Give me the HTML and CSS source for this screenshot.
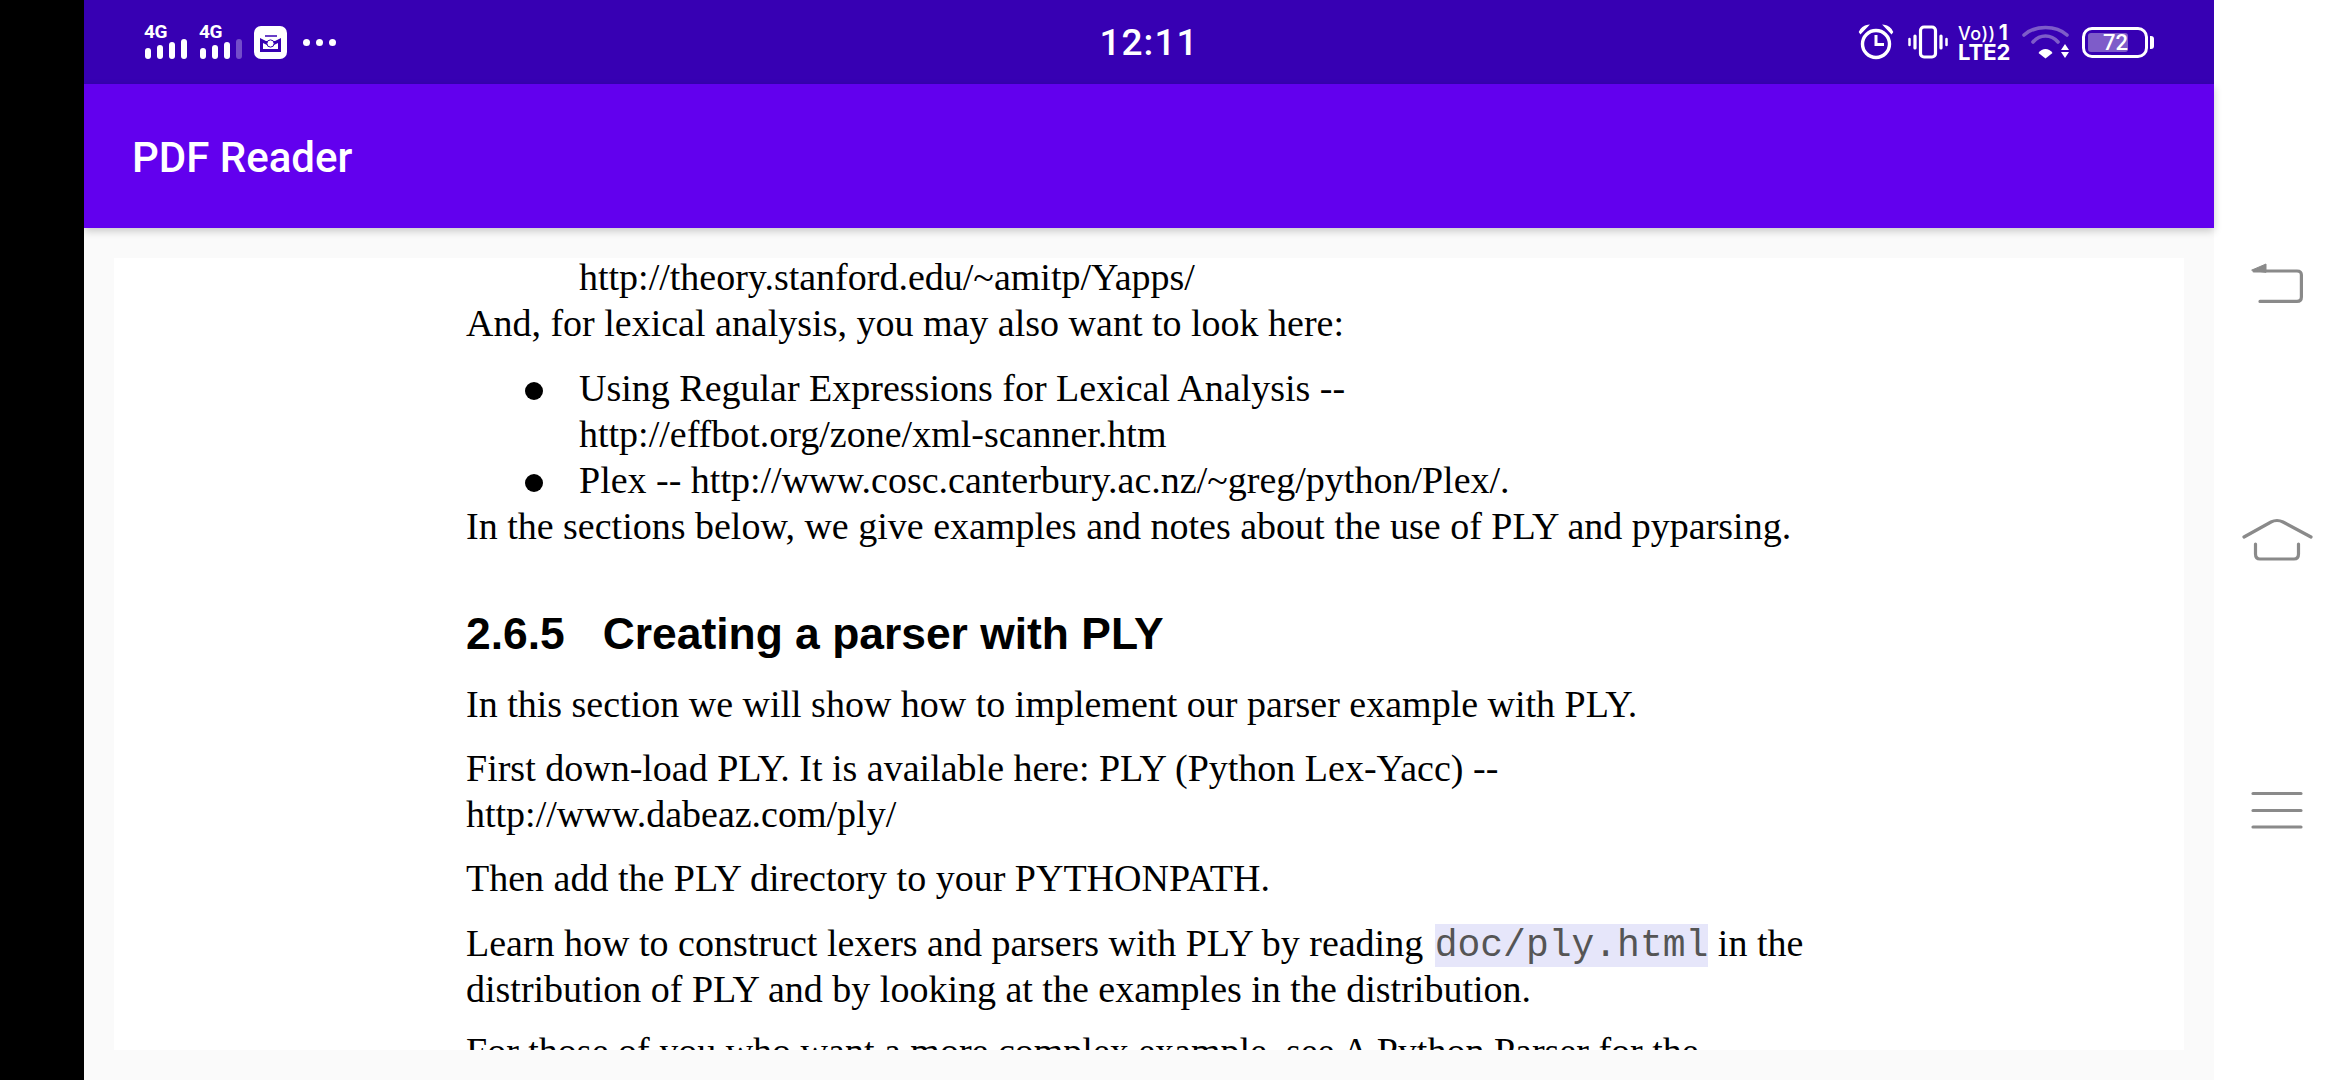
FILE: index.html
```html
<!DOCTYPE html>
<html lang="en">
<head>
    <meta charset="utf-8">
    <title>PDF Reader</title>
    <link rel="stylesheet" href="styles.css">
</head>
<body>
    <div class="edge"></div>
    <div class="app">
        <div class="status">
            <div class="status-left">
                <div class="signal">
                    <span class="net">4G</span>
                    <svg width="44" height="20" viewBox="0 0 44 20"><g fill="#fff"><rect x="1" y="9" width="6" height="11" rx="3"/><rect x="13" y="6" width="6" height="14" rx="3"/><rect x="25" y="3" width="6" height="17" rx="3"/><rect x="37" y="0" width="6" height="20" rx="3"/></g></svg>
                </div>
                <div class="signal">
                    <span class="net">4G</span>
                    <svg width="44" height="20" viewBox="0 0 44 20"><g fill="#fff"><rect x="1" y="9" width="6" height="11" rx="3"/><rect x="13" y="6" width="6" height="14" rx="3"/><rect x="25" y="3" width="6" height="17" rx="3"/><rect x="37" y="0" width="6" height="20" rx="3" opacity=".3"/></g></svg>
                </div>
                <svg class="mail" width="33" height="33" viewBox="0 0 33 33">
                    <rect width="33" height="33" rx="7" fill="#fff"/>
                    <path d="M11 10H23" stroke="#3700b3" stroke-width="1.500"/>
                    <path d="M6 12L12 15H21L27 12V26H6Z" fill="#3700b3"/>
                    <path d="M9 17L13 19H20L24 17V23H9Z" fill="#fff"/>
                    <circle cx="16.500" cy="17.500" r="3.600" fill="#fff" stroke="#3700b3" stroke-width="1"/>
                </svg>
                <div class="dots"><i></i><i></i><i></i></div>
            </div>
            <div class="clock">12:11</div>
            <div class="status-right">
                <svg class="ic-alarm" width="36" height="36" viewBox="0 0 36 36" fill="none" stroke="#fff">
                    <circle cx="18" cy="20" r="13.500" stroke-width="3.400"/>
                    <path d="M18 11V20.500H26" stroke-width="3"/>
                    <path d="M1.500 8Q4 2.500 10 1.500L2.500 9.500ZM34.500 8Q32 2.500 26 1.500L33.500 9.500Z" fill="#fff" stroke-width="1.400"/>
                </svg>
                <svg class="ic-vibrate" width="40" height="34" viewBox="0 0 40 34" fill="none" stroke="#fff" stroke-linecap="round">
                    <rect x="12.500" y="2" width="15" height="30" rx="3.500" stroke-width="3.200"/>
                    <path d="M7 11V23M33 11V23" stroke-width="3.200"/>
                    <path d="M1.500 14V20M38.500 14V20" stroke-width="2.500"/>
                </svg>
                <div class="sim">
                    <span class="sim-top">Vo))<b>1</b></span>
                    <span class="sim-bottom">LTE2</span>
                </div>
                <svg class="ic-wifi" width="48" height="34" viewBox="0 0 48 34" fill="none" stroke="#7e5cc9" stroke-linecap="round">
                    <path d="M2 10C13 0 34 0 45 10" stroke-width="3.600"/>
                    <path d="M11 17C18 9 29 9 36 17" stroke-width="3.600"/>
                    <path d="M16.500 28C20 22.500 27 22.500 30.500 28L23.500 33.500Z" fill="#fff" stroke="none"/>
                    <path d="M43 19L47 25H39ZM39 27H47L43 33Z" fill="#fff" stroke="none"/>
                </svg>
                <div class="battery">
                    <div class="battery-body">
                        <div class="battery-fill"></div>
                        <span class="battery-num">72</span>
                    </div>
                    <div class="battery-tip"></div>
                </div>
            </div>
        </div>
        <header class="bar">PDF Reader</header>
        <main class="viewer">
            <div class="page">
                <div class="doc">
                    <p class="line indent">http://theory.stanford.edu/~amitp/Yapps/</p>
                    <p class="line">And, for lexical analysis, you may also want to look here:</p>
                    <ul class="list">
                        <li>Using Regular Expressions for Lexical Analysis --<br>http://effbot.org/zone/xml-scanner.htm</li>
                        <li>Plex -- http://www.cosc.canterbury.ac.nz/~greg/python/Plex/.</li>
                    </ul>
                    <p class="line">In the sections below, we give examples and notes about the use of PLY and pyparsing.</p>
                    <h2 class="heading"><span class="num">2.6.5</span>Creating a parser with PLY</h2>
                    <p class="para">In this section we will show how to implement our parser example with PLY.</p>
                    <p class="para">First down-load PLY. It is available here: PLY (Python Lex-Yacc) --<br>http://www.dabeaz.com/ply/</p>
                    <p class="para">Then add the PLY directory to your PYTHONPATH.</p>
                    <p class="para para-code">Learn how to construct lexers and parsers with PLY by reading <code class="code">doc/ply.html</code> in the<br>distribution of PLY and by looking at the examples in the distribution.</p>
                    <p class="para para-last">For those of you who want a more complex example, see A Python Parser for the</p>
                </div>
            </div>
        </main>
    </div>
    <nav class="nav">
        <svg class="nav-back" width="52" height="41" viewBox="0 0 52 41" fill="none" stroke="#8a8a8a" stroke-width="3.200" stroke-linecap="round">
            <path d="M3 8H46Q50.400 8 50.400 12V34Q50.400 38.400 46 38.400H9"/>
            <path d="M1 7L15 1V9Z" fill="#8a8a8a" stroke-width="1"/>
        </svg>
        <svg class="nav-home" width="71" height="43" viewBox="0 0 71 43" fill="none" stroke="#8a8a8a" stroke-width="3.200" stroke-linecap="round">
            <path d="M2 19L29 4Q35 1 41 4L69 19"/>
            <path d="M13.500 26V36Q13.500 41 18 41H52Q56.500 41 56.500 36V26"/>
        </svg>
        <svg class="nav-menu" width="52" height="38" viewBox="0 0 52 38" stroke="#8a8a8a" stroke-width="3.200" stroke-linecap="round">
            <path d="M2 2.500H50M2 19.500H50M2 36H50"/>
        </svg>
    </nav>
</body>
</html>
```
FILE: styles.css
```css
* {
    box-sizing: border-box;
}

body {
    margin: 0;
    display: flex;
    height: 1080px;
    overflow: hidden;
    background: #fff;
    font-family: 'Roboto', sans-serif;
}

.edge {
    flex: none;
    width: 84px;
    background: #000;
}

.app {
    flex: none;
    width: 2130px;
    display: flex;
    flex-direction: column;
}

.status {
    height: 84px;
    background: #3700b3;
    color: #fff;
    padding: 0 60px;
    display: grid;
    grid-template-columns: 1fr auto 1fr;
    align-items: center;
}

.status-left {
    display: flex;
    align-items: center;
    gap: 11px;
}

.signal {
    display: flex;
    flex-direction: column;
    width: 44px;
    height: 34px;
}

.signal svg {
    display: block;
}

.net {
    font-size: 19px;
    font-weight: 700;
    line-height: 14px;
    letter-spacing: -0.5px;
}

.dots {
    display: flex;
    gap: 6px;
    margin-left: 5px;
}

.dots i {
    width: 7px;
    height: 7px;
    border-radius: 50%;
    background: #fff;
}

.clock {
    font-size: 37px;
    font-weight: 500;
    letter-spacing: 1px;
}

.status-right {
    display: flex;
    align-items: center;
    justify-content: flex-end;
}

.ic-vibrate {
    margin-left: 14px;
}

.sim {
    display: flex;
    flex-direction: column;
    margin-left: 10px;
    width: 54px;
    font-family: 'Inter', sans-serif;
    line-height: 19px;
}

.sim-top {
    font-size: 18px;
    font-weight: 500;
    letter-spacing: 0.5px;
}

.sim-top b {
    font-size: 21px;
    font-weight: 700;
    margin-left: 3px;
}

.sim-bottom {
    font-size: 22px;
    font-weight: 700;
}

.ic-wifi {
    margin-left: 10px;
}

.battery {
    display: flex;
    align-items: center;
    gap: 2px;
    margin-left: 12px;
}

.battery-body {
    position: relative;
    width: 66px;
    height: 31px;
    border: 3px solid #fff;
    border-radius: 10px;
    padding: 3px;
}

.battery-fill {
    width: 40px;
    height: 100%;
    background: #7e5cc9;
    border-radius: 3px;
}

.battery-num {
    position: absolute;
    left: 18px;
    top: 0;
    font-size: 22px;
    line-height: 25px;
    font-weight: 500;
}

.battery-tip {
    width: 4px;
    height: 13px;
    background: #fff;
    border-radius: 0 3px 3px 0;
}

.bar {
    height: 144px;
    background: #6200ee;
    color: #fff;
    font-size: 42px;
    font-weight: 500;
    padding: 2px 0 0 48px;
    display: flex;
    align-items: center;
    box-shadow: 0 3px 8px rgba(0, 0, 0, 0.2);
    position: relative;
}

.viewer {
    flex: 1;
    min-height: 0;
    background: #fafafa;
    padding: 30px;
}

.page {
    height: 100%;
    background: #fff;
    overflow: hidden;
    color: #000;
}

.doc {
    margin-top: -4px;
    padding-left: 352px;
    font-family: 'Liberation Serif', serif;
    font-size: 38px;
    line-height: 46px;
}

.doc p {
    margin: 0;
}

.indent {
    padding-left: 113px;
}

.list {
    margin: 19px 0 0;
    padding: 0 0 0 113px;
    list-style: none;
}

.list li {
    position: relative;
}

.list li::before {
    content: "";
    position: absolute;
    left: -54px;
    top: 17px;
    width: 18px;
    height: 18px;
    border-radius: 50%;
    background: #000;
}

.heading {
    margin: 55px 0 -1px;
    font-family: 'Liberation Sans', sans-serif;
    font-size: 44.400px;
    line-height: 60px;
    font-weight: 700;
}

.num {
    margin-right: 38px;
}

.doc .para {
    margin-top: 18px;
}

.doc .para-code {
    margin-top: 19px;
}

.doc .para-last {
    margin-top: 16px;
}

.code {
    font-family: 'Liberation Mono', monospace;
    font-size: 38px;
    line-height: 1;
    margin-left: 2px;
    color: #555;
    background: #e6e6fa;
}

.nav {
    flex: none;
    width: 126px;
    display: flex;
    flex-direction: column;
    align-items: center;
    padding-top: 263px;
}

.nav-home {
    margin-top: 214px;
}

.nav-menu {
    margin-top: 230px;
}
```
